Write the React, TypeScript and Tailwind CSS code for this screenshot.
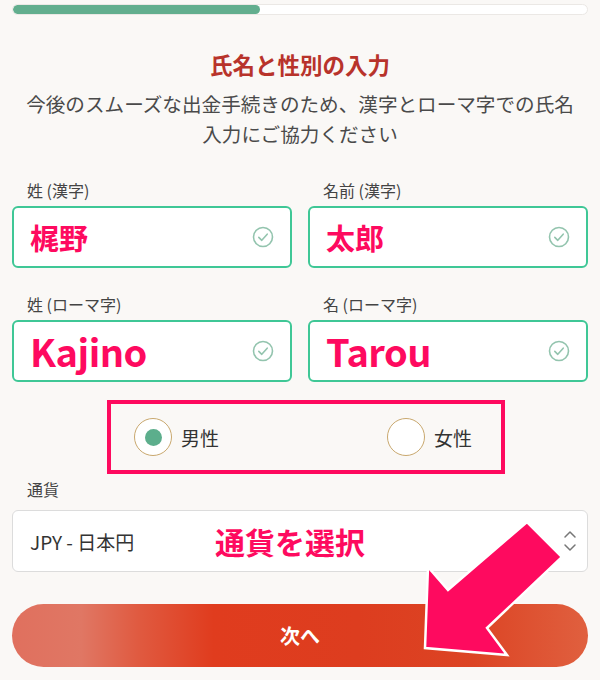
import React from 'react'

const jp = { fontFamily: '"Noto Sans CJK JP", "Noto Sans", sans-serif' }

// small round check shown at the right of a filled input
function CheckMark() {
  return (
    <svg width="22" height="22" viewBox="0 0 22 22" fill="none">
      <circle cx="11" cy="11" r="9.5" stroke="#93c4ae" strokeWidth="1.6" />
      <path d="M6.8 11.4 L9.8 14.3 L15.2 8.2" stroke="#93c4ae" strokeWidth="1.6" strokeLinecap="round" strokeLinejoin="round" />
    </svg>
  )
}

function NameField({ label, value, big }: { label: string; value: string; big?: boolean }) {
  return (
    <div className="flex flex-col">
      <div className="h-[22px] pl-[15px] text-[16px] leading-[22px] text-[#444]">{label}</div>
      <div className="mt-[5px] flex h-[62px] items-center justify-between rounded-[6px] border-2 border-[#3fc796] bg-white pl-[16px] pr-[16px]">
        <span
          className={
            big
              ? 'text-[38px] font-bold leading-none tracking-[-0.5px] text-[#fe0a5f]'
              : 'text-[29px] font-bold leading-none text-[#fe0a5f]'
          }
        >
          {value}
        </span>
        <CheckMark />
      </div>
    </div>
  )
}

function Radio({ checked, label }: { checked?: boolean; label: string }) {
  return (
    <div className="flex items-center gap-[9px]">
      <div className="flex h-[38px] w-[38px] items-center justify-center rounded-full border-[1.5px] border-[#c9a86e] bg-white">
        {checked && <div className="h-[17px] w-[17px] rounded-full bg-[#5cae8c]" />}
      </div>
      <span className="text-[19px] leading-none text-[#333]">{label}</span>
    </div>
  )
}

export default function App() {
  return (
    <div className="relative h-[680px] w-[600px] overflow-hidden bg-[#faf8f6]" style={jp}>
      <div className="px-[12px]">
        {/* progress */}
        <div className="mt-[4px] h-[11px] w-full overflow-hidden rounded-full border border-[#ebe8e5] bg-white">
          <div className="h-full w-[247px] rounded-full bg-[#62ae8e]" />
        </div>

        <h1 className="mt-[34px] text-center text-[22.5px] font-bold leading-[30px] text-[#b8332b]">
          氏名と性別の入力
        </h1>
        <p className="mt-[10px] text-center text-[19.6px] leading-[30px] text-[#4a4a4a]">
          今後のスムーズな出金手続きのため、漢字とローマ字での氏名
          <br />
          入力にご協力ください
        </p>

        <div className="mt-[30px] grid grid-cols-2 gap-x-[16px] gap-y-[25px]">
          <NameField label="姓 (漢字)" value="梶野" />
          <NameField label="名前 (漢字)" value="太郎" />
          <NameField label="姓 (ローマ字)" value="Kajino" big />
          <NameField label="名 (ローマ字)" value="Tarou" big />
        </div>

        {/* gender */}
        <div className="ml-[95px] mt-[18px] flex h-[74px] w-[398px] items-center justify-between border-4 border-[#fe0a5f] pl-[23px] pr-[29px]">
          <Radio checked label="男性" />
          <Radio label="女性" />
        </div>

        <div className="mt-[4px] h-[22px] pl-[15px] text-[16px] leading-[22px] text-[#444]">通貨</div>
        <div className="mt-[10px] flex h-[62px] items-center justify-between rounded-[6px] border border-[#dcdcdc] bg-white pl-[17px] pr-[10px]">
          <span className="text-[19px] leading-none text-[#333]">JPY - 日本円</span>
          <span className="absolute left-[215px] top-[526px] text-[30px] font-bold leading-none text-[#fe0a5f]">
            通貨を選択
          </span>
          <svg width="14" height="24" viewBox="0 0 14 24" fill="none">
            <path d="M2 8 L7 3 L12 8" stroke="#777" strokeWidth="1.5" strokeLinecap="round" strokeLinejoin="round" />
            <path d="M2 16 L7 21 L12 16" stroke="#777" strokeWidth="1.5" strokeLinecap="round" strokeLinejoin="round" />
          </svg>
        </div>

        <button
          className="mt-[32px] flex h-[63px] w-full items-center justify-center rounded-full text-[20px] font-bold text-white"
          style={{
            background:
              'linear-gradient(90deg, #e0705e 0%, #e07764 12%, #e05a40 22%, #e03c1e 35%, #dd3d1f 60%, #dc4424 80%, #e0603f 100%)',
          }}
        >
          次へ
        </button>
      </div>

      {/* annotation arrow */}
      <svg className="pointer-events-none absolute left-0 top-0" width="600" height="680" viewBox="0 0 600 680">
        <polygon
          points="425,648 428,567 448,590 527,522 562,557 487,628 507,655"
          fill="#fe0a5f"
          stroke="#ffffff"
          strokeWidth="2.5"
          strokeLinejoin="miter"
        />
      </svg>
    </div>
  )
}
